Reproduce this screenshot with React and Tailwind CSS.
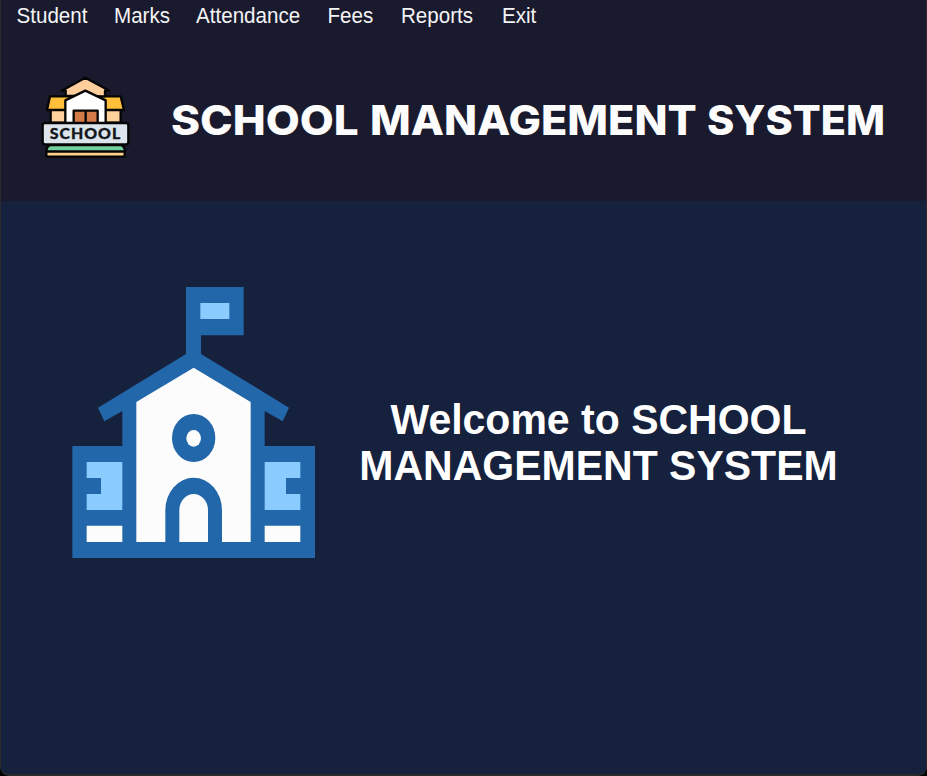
const menu = [
  { label: 'Student', width: 'w-[97.5px]' },
  { label: 'Marks', width: 'w-[82px]' },
  { label: 'Attendance', width: 'w-[131.5px]' },
  { label: 'Fees', width: 'w-[73.5px]' },
  { label: 'Reports', width: 'w-[101px]' },
  { label: 'Exit', width: 'w-[60px]' },
];

function SchoolLogo() {
  return (
    <svg viewBox="0 0 330 315" className="h-[105px] w-[110px] shrink-0" stroke="#050505" strokeWidth="7" strokeLinejoin="round">
      <path d="M62 128h210v45H62z" fill="#ffd19b" />
      <path d="M60 94h212l10 41H51z" fill="#ffbf3b" />
      <path d="M107 92V77H95l71-39 72 39h-13v17z" fill="#ffce9d" />
      <path d="M106 176v-70l60-29 61 29v70z" fill="#fff" />
      <path d="M131 137h72v38h-72z" fill="#d57b48" />
      <path d="M167 138v36" fill="none" />
      <path d="M49 260q1-18 12-20h212q11 2 12 20z" fill="#72d09d" />
      <rect x="49" y="260" width="235" height="15" rx="4" fill="#ffd18d" />
      <rect x="38" y="174" width="257" height="64" rx="7" fill="#dce5eb" />
      <text x="59" y="222" textLength="215" lengthAdjust="spacingAndGlyphs" stroke="#14171b" strokeWidth="1" fill="#14171b" className="font-['Lato',sans-serif] text-[45px] font-black tracking-[3px]">SCHOOL</text>
    </svg>
  );
}

function SchoolBuilding() {
  return (
    <svg viewBox="0 0 810 885" className="h-[295px] w-[270px] shrink-0">
      <path fill="#2267aa" d="M378 36H551V181H423V237L687 398 668 439 614 408V513H765V849H37V513H187V408L133 439 114 398 378 237Z" />
      <path fill="#8accff" d="M421 84h87v48h-87zM80 561H187V705H80V657H123V609H80zM614 561H721V609H678V657H721V705H614z" />
      <path fill="#fcfcfc" d="M401 278L572 381V801H486V706A85 98 0 0 0 316 706V801H229V381ZM80 752H187V801H80zM614 752H721V801H614zM358 801V706A43 49 0 0 1 444 706V801Z" />
      <ellipse cx="401" cy="489" rx="65" ry="72" fill="#2267aa" />
      <ellipse cx="401" cy="490" rx="22" ry="25" fill="#fcfcfc" />
    </svg>
  );
}

export default function App() {
  return (
    <div className="h-[776px] w-[927px] overflow-hidden bg-black font-['Liberation_Sans',Arial,sans-serif]">
      <div className="flex h-[776px] flex-col overflow-hidden rounded-b-[9px] border-x border-b-2 border-[#292a2e] bg-[#16213e]">
        <header className="h-[201px] shrink-0 bg-[#1a1a2e]">
          <nav className="flex h-[30px] pl-[15.5px] text-[20.6px] leading-[30px] text-[#f4f4f5]">
            {menu.map((item) => (
              <span key={item.label} className={`${item.width} origin-center scale-y-[1.08] whitespace-nowrap`}>{item.label}</span>
            ))}
          </nav>
          <div className="flex pl-[29px] pt-[35px]">
            <SchoolLogo />
            <h1 className="flex pl-[31px] font-['Inter',sans-serif] text-[41px] font-extrabold leading-[110px] text-[#fcfcfc]">
              <span className="w-[199px] origin-left scale-x-[1.074]">SCHOOL</span>
              <span className="w-[337px] origin-left scale-x-[1.054]">MANAGEMENT</span>
              <span className="origin-left scale-x-[1.01]">SYSTEM</span>
            </h1>
          </div>
        </header>
        <main className="flex pl-[59px] pt-[74px]">
          <SchoolBuilding />
          <h2 className="w-[537px] origin-bottom scale-y-[1.04] pt-[128px] text-center text-[41px] font-bold leading-[44px] text-white">
            Welcome to SCHOOL<br />MANAGEMENT SYSTEM
          </h2>
        </main>
      </div>
    </div>
  );
}
